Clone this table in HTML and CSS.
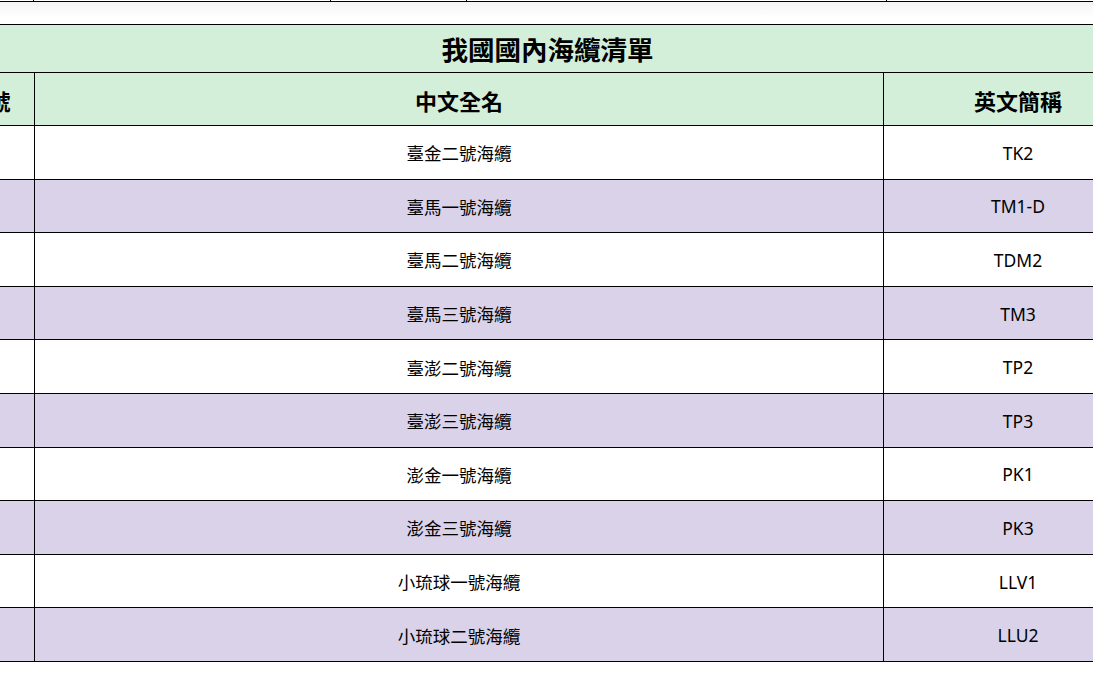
FILE: index.html
```html
<!DOCTYPE html>
<html lang="zh-Hant">
<head>
<meta charset="utf-8">
<title>我國國內海纜清單</title>
<link rel="stylesheet" href="styles.css">
</head>
<body>
<div class="frozen">
  <div class="fz c1"></div>
  <div class="fz c2"></div>
  <div class="fz c3"></div>
  <div class="fz c4"></div>
  <div class="fz c5"></div>
</div>
<div class="shadow"></div>
<table class="sheet">
  <colgroup>
    <col class="w-no">
    <col class="w-name">
    <col class="w-abbr">
  </colgroup>
  <tr class="title-row"><td colspan="3">我國國內海纜清單</td></tr>
  <tr class="head-row"><td>編號</td><td>中文全名</td><td>英文簡稱</td></tr>
  <tr class="odd"><td></td><td>臺金二號海纜</td><td>TK2</td></tr>
  <tr class="even"><td></td><td>臺馬一號海纜</td><td>TM1-D</td></tr>
  <tr class="odd"><td></td><td>臺馬二號海纜</td><td>TDM2</td></tr>
  <tr class="even"><td></td><td>臺馬三號海纜</td><td>TM3</td></tr>
  <tr class="odd"><td></td><td>臺澎二號海纜</td><td>TP2</td></tr>
  <tr class="even"><td></td><td>臺澎三號海纜</td><td>TP3</td></tr>
  <tr class="odd"><td></td><td>澎金一號海纜</td><td>PK1</td></tr>
  <tr class="even"><td></td><td>澎金三號海纜</td><td>PK3</td></tr>
  <tr class="odd"><td></td><td>小琉球一號海纜</td><td>LLV1</td></tr>
  <tr class="even"><td></td><td>小琉球二號海纜</td><td>LLU2</td></tr>
</table>
</body>
</html>
```
FILE: styles.css
```css
html, body {
  margin: 0;
  padding: 0;
  background: #fff;
  overflow: hidden;
  width: 1093px;
  height: 681px;
}
body {
  font-family: "Noto Sans", "Noto Sans CJK TC", sans-serif;
  color: #000;
}
.frozen {
  display: flex;
  height: 1px;
  border-bottom: 1px solid #000;
  width: 1093px;
}
.fz {
  border-right: 1px solid #000;
  flex: none;
}
.c1 { width: 33px; }
.c2 { width: 296px; }
.c3 { width: 135px; }
.c4 { width: 419px; }
.c5 { width: 100px; border-right: none; }
.shadow {
  height: 22px;
  background: linear-gradient(#f4f4f4, #ffffff 70%);
}
.sheet {
  border-collapse: collapse;
  table-layout: fixed;
  width: 1210px;
  margin-left: -58px;
}
.w-no { width: 92px; }
.w-name { width: 849px; }
.w-abbr { width: 269px; }
.sheet td {
  border: 1px solid #000;
  text-align: center;
  padding: 0;
  white-space: nowrap;
  overflow: hidden;
}
.title-row td {
  height: 47px;
  background: #d3efd9;
  font-weight: bold;
  font-size: 26.5px;
}
.head-row td {
  height: 51px;
  background: #d3efd9;
  font-weight: bold;
  font-size: 22px;
  padding-top: 1px;
}
.odd td, .even td {
  height: 51.6px;
  font-size: 17.5px;
  padding-top: 1px;
}
.odd td { background: #ffffff; }
.even td { background: #d9d2e9; }
```
